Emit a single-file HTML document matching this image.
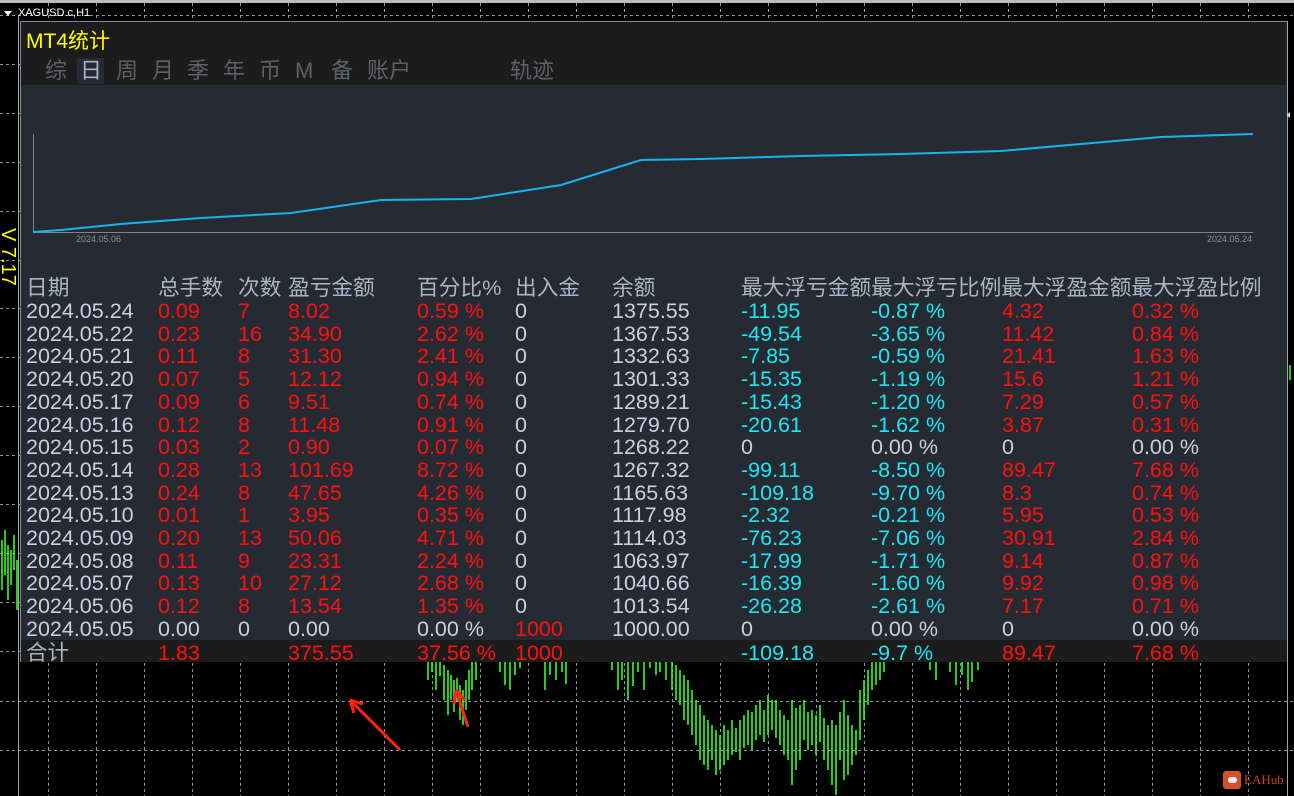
<!DOCTYPE html>
<html><head><meta charset="utf-8"><style>
*{margin:0;padding:0;box-sizing:border-box}
body{width:1294px;height:796px;background:#000;position:relative;overflow:hidden;font-family:"Liberation Sans","Noto Sans CJK SC",sans-serif}
.abs{position:absolute}
#panel{left:20px;top:21px;width:1267px;height:641px;background:#262b33;border:1px solid #7d8a9a;border-right:none}
#top{left:0;top:0;width:1265px;height:63px;background:#1c1c1c}
.tab{position:absolute;top:36px;font-size:22px;color:#5d6167;line-height:26px}
.t{position:absolute;font-size:21.5px;line-height:22px;white-space:nowrap}
.w{color:#c8d0e0}.r{color:#ff1010}.c{color:#1ee6f2}.h{color:#a9b4c6}
</style></head><body>
<div class="abs" style="left:0;top:0;width:1294px;height:3px;background:#bdbdbd"></div>
<svg class="abs" style="left:0;top:0" width="1294" height="796">
<g stroke="#8596a8" stroke-width="1" stroke-dasharray="3,3">
<path d="M48.5 3V796M96.5 3V796M144.5 3V796M192.5 3V796M240.5 3V796M288.5 3V796M336.5 3V796M384.5 3V796M432.5 3V796M480.5 3V796M528.5 3V796M576.5 3V796M624.5 3V796M672.5 3V796M720.5 3V796M768.5 3V796M816.5 3V796M864.5 3V796M912.5 3V796M960.5 3V796M1008.5 3V796M1056.5 3V796M1104.5 3V796M1152.5 3V796M1200.5 3V796M1248.5 3V796"/>
<path d="M0 15.5H1294M0 64.5H20M0 113.5H20M0 162.5H20M0 211.5H20M0 260.5H20M0 308.5H20M0 357.5H20M0 406.5H20M0 455.5H20M0 504.5H20M0 553.5H20M0 602.5H20M0 651.5H20M0 701.5H1294M0 750.5H1294"/>
</g>
<path d="M18.5 15V796" stroke="#9aa" stroke-width="1"/>
<g stroke="#33ff22" stroke-width="1.6">
<path d="M2 540V590M5 530V575M8 545V600M11 550V585M14 535V570M17 560V610M1290 365V380
M428 662V680M432 662V672M436 662V690M440 662V676M444 665V700M448 670V715M451 675V700M454 680V712M457 678V702M460 685V720M463 690V725M466 680V710M469 670V700M472 662V690M476 662V680
M500 662V672M505 662V685M510 662V690M515 662V675M520 662V668M545 662V690M550 662V675M556 662V680M562 662V672M566 662V684
M612 662V670M618 662V690M622 662V680M628 662V700M633 662V686M638 662V672M644 662V690M650 662V668M656 662V675M660 662V672M666 662V680
M672 662V690M676 665V700M680 670V705M684 675V720M688 680V725M692 690V735M696 700V745M700 705V760M704 715V765M708 720V770M712 725V760M716 730V775M720 735V770M724 725V765M728 730V760M732 720V755M736 728V752M740 720V760M744 715V748M748 710V745M752 712V750M756 705V740M760 700V735M764 710V742M768 695V735M772 700V730
M776 700V738M780 710V745M784 715V755M788 720V760M792 700V785M796 708V770M800 705V760M804 700V740M808 712V750M812 710V745M816 715V755M820 705V742M824 718V760M828 725V770M832 720V785M836 725V795M840 712V760M844 700V780M848 715V775M852 725V765M856 730V755M860 690V740M864 680V720M868 670V705M872 662V690M876 662V685M880 662V680M884 662V672
M930 662V670M936 662V680M950 662V672M956 662V685M962 662V675M968 662V690M972 662V682M978 662V670"/>
</g>
<path d="M400 750L350 700M350 700L354 713M350 700L363 704" stroke="#f21" stroke-width="3" fill="none"/>
<path d="M468 727L456 690M456 690L454 704M456 690L465 700" stroke="#f21" stroke-width="3" fill="none"/>
<path d="M1287.5 21V796" stroke="#9aa" stroke-width="1"/>
</svg>
<div class="abs" style="left:1283px;top:112px;width:0;height:0;border:3px solid transparent;border-right:4px solid #ccc"></div>
<div class="abs" style="left:4px;top:11px;width:0;height:0;border:4px solid transparent;border-top:5px solid #fff"></div>
<div class="abs" style="left:18px;top:7px;font-size:11px;color:#fff">XAGUSD.c,H1</div>
<div class="abs" style="top:228px;font-size:20px;color:#ff0;transform:rotate(90deg);transform-origin:left top;left:19px;white-space:nowrap">V 7.17</div>
<div id="panel" class="abs">
 <div id="top" class="abs"></div>
 <div class="abs" style="left:5px;top:3px;font-size:21px;color:#ff0">MT4统计</div>
 <div class="abs" style="left:56px;top:36px;width:27px;height:26px;background:#262b33;border-radius:2px"></div>
 <span class="tab" style="left:24px">综</span><span class="tab" style="left:59px;color:#a9b4c6">日</span><span class="tab" style="left:95px">周</span><span class="tab" style="left:131px">月</span><span class="tab" style="left:166px">季</span><span class="tab" style="left:202px">年</span><span class="tab" style="left:238px">币</span><span class="tab" style="left:274px">M</span><span class="tab" style="left:310px">备</span><span class="tab" style="left:346px">账户</span><span class="tab" style="left:489px">轨迹</span>
 <svg class="abs" style="left:0;top:0" width="1266" height="640">
  <path d="M12.5 112V210.5H1232" stroke="#7f858c" fill="none"/>
  <path d="M12 210L40 208L100 202L180 196L270 191L360 178L450 177L540 163L620 138L680 137L780 134L880 132L980 129L1060 122L1140 115L1232 112" stroke="#16b4f0" stroke-width="2" fill="none"/>
  <text x="55" y="220" font-size="9" fill="#8a9099" font-family="Liberation Sans">2024.05.06</text>
  <text x="1186" y="220" font-size="9" fill="#8a9099" font-family="Liberation Sans">2024.05.24</text>
 </svg>
 <div class="abs" style="left:0;top:618px;width:1266px;height:22px;background:#1c1c1c"></div>
</div>
<div class="abs" style="left:1223px;top:771px;width:18px;height:18px;background:#d4502a;border-radius:3px"></div>
<div class="abs" style="left:1228px;top:777px;width:9px;height:6px;background:#eee;border-radius:3px"></div>
<div class="abs" style="left:1244px;top:772px;font-size:13px;color:#c0432a;font-family:'Liberation Serif',serif">EAHub</div>
<div class="abs" style="left:20px;top:0;width:1267px;height:796px">
<div class="t h" style="left:6px;top:277px;font-size:21.7px">日期</div><div class="t h" style="left:138px;top:277px;font-size:21.7px">总手数</div><div class="t h" style="left:218px;top:277px;font-size:21.7px">次数</div><div class="t h" style="left:268px;top:277px;font-size:21.7px">盈亏金额</div><div class="t h" style="left:397px;top:277px;font-size:21.7px">百分比%</div><div class="t h" style="left:495px;top:277px;font-size:21.7px">出入金</div><div class="t h" style="left:592px;top:277px;font-size:21.7px">余额</div><div class="t h" style="left:721px;top:277px;font-size:21.7px">最大浮亏金额最大浮亏比例最大浮盈金额最大浮盈比例</div>
</div>
<div class="abs" style="left:26px;top:300px">
<div style="position:relative">
<div class="t w" style="left:0;top:0">2024.05.24</div><div class="t r" style="left:132px;top:0">0.09</div><div class="t r" style="left:212px;top:0">7</div><div class="t r" style="left:262px;top:0">8.02</div><div class="t r" style="left:391px;top:0">0.59 %</div><div class="t w" style="left:489px;top:0">0</div><div class="t w" style="left:586px;top:0">1375.55</div><div class="t c" style="left:715px;top:0">-11.95</div><div class="t c" style="left:845px;top:0">-0.87 %</div><div class="t r" style="left:976px;top:0">4.32</div><div class="t r" style="left:1106px;top:0">0.32 %</div>
<div class="t w" style="left:0;top:22.7px">2024.05.22</div><div class="t r" style="left:132px;top:22.7px">0.23</div><div class="t r" style="left:212px;top:22.7px">16</div><div class="t r" style="left:262px;top:22.7px">34.90</div><div class="t r" style="left:391px;top:22.7px">2.62 %</div><div class="t w" style="left:489px;top:22.7px">0</div><div class="t w" style="left:586px;top:22.7px">1367.53</div><div class="t c" style="left:715px;top:22.7px">-49.54</div><div class="t c" style="left:845px;top:22.7px">-3.65 %</div><div class="t r" style="left:976px;top:22.7px">11.42</div><div class="t r" style="left:1106px;top:22.7px">0.84 %</div>
<div class="t w" style="left:0;top:45.4px">2024.05.21</div><div class="t r" style="left:132px;top:45.4px">0.11</div><div class="t r" style="left:212px;top:45.4px">8</div><div class="t r" style="left:262px;top:45.4px">31.30</div><div class="t r" style="left:391px;top:45.4px">2.41 %</div><div class="t w" style="left:489px;top:45.4px">0</div><div class="t w" style="left:586px;top:45.4px">1332.63</div><div class="t c" style="left:715px;top:45.4px">-7.85</div><div class="t c" style="left:845px;top:45.4px">-0.59 %</div><div class="t r" style="left:976px;top:45.4px">21.41</div><div class="t r" style="left:1106px;top:45.4px">1.63 %</div>
<div class="t w" style="left:0;top:68.1px">2024.05.20</div><div class="t r" style="left:132px;top:68.1px">0.07</div><div class="t r" style="left:212px;top:68.1px">5</div><div class="t r" style="left:262px;top:68.1px">12.12</div><div class="t r" style="left:391px;top:68.1px">0.94 %</div><div class="t w" style="left:489px;top:68.1px">0</div><div class="t w" style="left:586px;top:68.1px">1301.33</div><div class="t c" style="left:715px;top:68.1px">-15.35</div><div class="t c" style="left:845px;top:68.1px">-1.19 %</div><div class="t r" style="left:976px;top:68.1px">15.6</div><div class="t r" style="left:1106px;top:68.1px">1.21 %</div>
<div class="t w" style="left:0;top:90.8px">2024.05.17</div><div class="t r" style="left:132px;top:90.8px">0.09</div><div class="t r" style="left:212px;top:90.8px">6</div><div class="t r" style="left:262px;top:90.8px">9.51</div><div class="t r" style="left:391px;top:90.8px">0.74 %</div><div class="t w" style="left:489px;top:90.8px">0</div><div class="t w" style="left:586px;top:90.8px">1289.21</div><div class="t c" style="left:715px;top:90.8px">-15.43</div><div class="t c" style="left:845px;top:90.8px">-1.20 %</div><div class="t r" style="left:976px;top:90.8px">7.29</div><div class="t r" style="left:1106px;top:90.8px">0.57 %</div>
<div class="t w" style="left:0;top:113.5px">2024.05.16</div><div class="t r" style="left:132px;top:113.5px">0.12</div><div class="t r" style="left:212px;top:113.5px">8</div><div class="t r" style="left:262px;top:113.5px">11.48</div><div class="t r" style="left:391px;top:113.5px">0.91 %</div><div class="t w" style="left:489px;top:113.5px">0</div><div class="t w" style="left:586px;top:113.5px">1279.70</div><div class="t c" style="left:715px;top:113.5px">-20.61</div><div class="t c" style="left:845px;top:113.5px">-1.62 %</div><div class="t r" style="left:976px;top:113.5px">3.87</div><div class="t r" style="left:1106px;top:113.5px">0.31 %</div>
<div class="t w" style="left:0;top:136.2px">2024.05.15</div><div class="t r" style="left:132px;top:136.2px">0.03</div><div class="t r" style="left:212px;top:136.2px">2</div><div class="t r" style="left:262px;top:136.2px">0.90</div><div class="t r" style="left:391px;top:136.2px">0.07 %</div><div class="t w" style="left:489px;top:136.2px">0</div><div class="t w" style="left:586px;top:136.2px">1268.22</div><div class="t w" style="left:715px;top:136.2px">0</div><div class="t w" style="left:845px;top:136.2px">0.00 %</div><div class="t w" style="left:976px;top:136.2px">0</div><div class="t w" style="left:1106px;top:136.2px">0.00 %</div>
<div class="t w" style="left:0;top:158.9px">2024.05.14</div><div class="t r" style="left:132px;top:158.9px">0.28</div><div class="t r" style="left:212px;top:158.9px">13</div><div class="t r" style="left:262px;top:158.9px">101.69</div><div class="t r" style="left:391px;top:158.9px">8.72 %</div><div class="t w" style="left:489px;top:158.9px">0</div><div class="t w" style="left:586px;top:158.9px">1267.32</div><div class="t c" style="left:715px;top:158.9px">-99.11</div><div class="t c" style="left:845px;top:158.9px">-8.50 %</div><div class="t r" style="left:976px;top:158.9px">89.47</div><div class="t r" style="left:1106px;top:158.9px">7.68 %</div>
<div class="t w" style="left:0;top:181.6px">2024.05.13</div><div class="t r" style="left:132px;top:181.6px">0.24</div><div class="t r" style="left:212px;top:181.6px">8</div><div class="t r" style="left:262px;top:181.6px">47.65</div><div class="t r" style="left:391px;top:181.6px">4.26 %</div><div class="t w" style="left:489px;top:181.6px">0</div><div class="t w" style="left:586px;top:181.6px">1165.63</div><div class="t c" style="left:715px;top:181.6px">-109.18</div><div class="t c" style="left:845px;top:181.6px">-9.70 %</div><div class="t r" style="left:976px;top:181.6px">8.3</div><div class="t r" style="left:1106px;top:181.6px">0.74 %</div>
<div class="t w" style="left:0;top:204.3px">2024.05.10</div><div class="t r" style="left:132px;top:204.3px">0.01</div><div class="t r" style="left:212px;top:204.3px">1</div><div class="t r" style="left:262px;top:204.3px">3.95</div><div class="t r" style="left:391px;top:204.3px">0.35 %</div><div class="t w" style="left:489px;top:204.3px">0</div><div class="t w" style="left:586px;top:204.3px">1117.98</div><div class="t c" style="left:715px;top:204.3px">-2.32</div><div class="t c" style="left:845px;top:204.3px">-0.21 %</div><div class="t r" style="left:976px;top:204.3px">5.95</div><div class="t r" style="left:1106px;top:204.3px">0.53 %</div>
<div class="t w" style="left:0;top:227px">2024.05.09</div><div class="t r" style="left:132px;top:227px">0.20</div><div class="t r" style="left:212px;top:227px">13</div><div class="t r" style="left:262px;top:227px">50.06</div><div class="t r" style="left:391px;top:227px">4.71 %</div><div class="t w" style="left:489px;top:227px">0</div><div class="t w" style="left:586px;top:227px">1114.03</div><div class="t c" style="left:715px;top:227px">-76.23</div><div class="t c" style="left:845px;top:227px">-7.06 %</div><div class="t r" style="left:976px;top:227px">30.91</div><div class="t r" style="left:1106px;top:227px">2.84 %</div>
<div class="t w" style="left:0;top:249.7px">2024.05.08</div><div class="t r" style="left:132px;top:249.7px">0.11</div><div class="t r" style="left:212px;top:249.7px">9</div><div class="t r" style="left:262px;top:249.7px">23.31</div><div class="t r" style="left:391px;top:249.7px">2.24 %</div><div class="t w" style="left:489px;top:249.7px">0</div><div class="t w" style="left:586px;top:249.7px">1063.97</div><div class="t c" style="left:715px;top:249.7px">-17.99</div><div class="t c" style="left:845px;top:249.7px">-1.71 %</div><div class="t r" style="left:976px;top:249.7px">9.14</div><div class="t r" style="left:1106px;top:249.7px">0.87 %</div>
<div class="t w" style="left:0;top:272.4px">2024.05.07</div><div class="t r" style="left:132px;top:272.4px">0.13</div><div class="t r" style="left:212px;top:272.4px">10</div><div class="t r" style="left:262px;top:272.4px">27.12</div><div class="t r" style="left:391px;top:272.4px">2.68 %</div><div class="t w" style="left:489px;top:272.4px">0</div><div class="t w" style="left:586px;top:272.4px">1040.66</div><div class="t c" style="left:715px;top:272.4px">-16.39</div><div class="t c" style="left:845px;top:272.4px">-1.60 %</div><div class="t r" style="left:976px;top:272.4px">9.92</div><div class="t r" style="left:1106px;top:272.4px">0.98 %</div>
<div class="t w" style="left:0;top:295.1px">2024.05.06</div><div class="t r" style="left:132px;top:295.1px">0.12</div><div class="t r" style="left:212px;top:295.1px">8</div><div class="t r" style="left:262px;top:295.1px">13.54</div><div class="t r" style="left:391px;top:295.1px">1.35 %</div><div class="t w" style="left:489px;top:295.1px">0</div><div class="t w" style="left:586px;top:295.1px">1013.54</div><div class="t c" style="left:715px;top:295.1px">-26.28</div><div class="t c" style="left:845px;top:295.1px">-2.61 %</div><div class="t r" style="left:976px;top:295.1px">7.17</div><div class="t r" style="left:1106px;top:295.1px">0.71 %</div>
<div class="t w" style="left:0;top:317.8px">2024.05.05</div><div class="t w" style="left:132px;top:317.8px">0.00</div><div class="t w" style="left:212px;top:317.8px">0</div><div class="t w" style="left:262px;top:317.8px">0.00</div><div class="t w" style="left:391px;top:317.8px">0.00 %</div><div class="t r" style="left:489px;top:317.8px">1000</div><div class="t w" style="left:586px;top:317.8px">1000.00</div><div class="t w" style="left:715px;top:317.8px">0</div><div class="t w" style="left:845px;top:317.8px">0.00 %</div><div class="t w" style="left:976px;top:317.8px">0</div><div class="t w" style="left:1106px;top:317.8px">0.00 %</div>
<div class="t h" style="left:0;top:342px">合计</div><div class="t r" style="left:132px;top:342px">1.83</div><div class="t r" style="left:262px;top:342px">375.55</div><div class="t r" style="left:391px;top:342px">37.56 %</div><div class="t r" style="left:489px;top:342px">1000</div><div class="t c" style="left:715px;top:342px">-109.18</div><div class="t c" style="left:845px;top:342px">-9.7 %</div><div class="t r" style="left:976px;top:342px">89.47</div><div class="t r" style="left:1106px;top:342px">7.68 %</div>
</div></div>
</body></html>
